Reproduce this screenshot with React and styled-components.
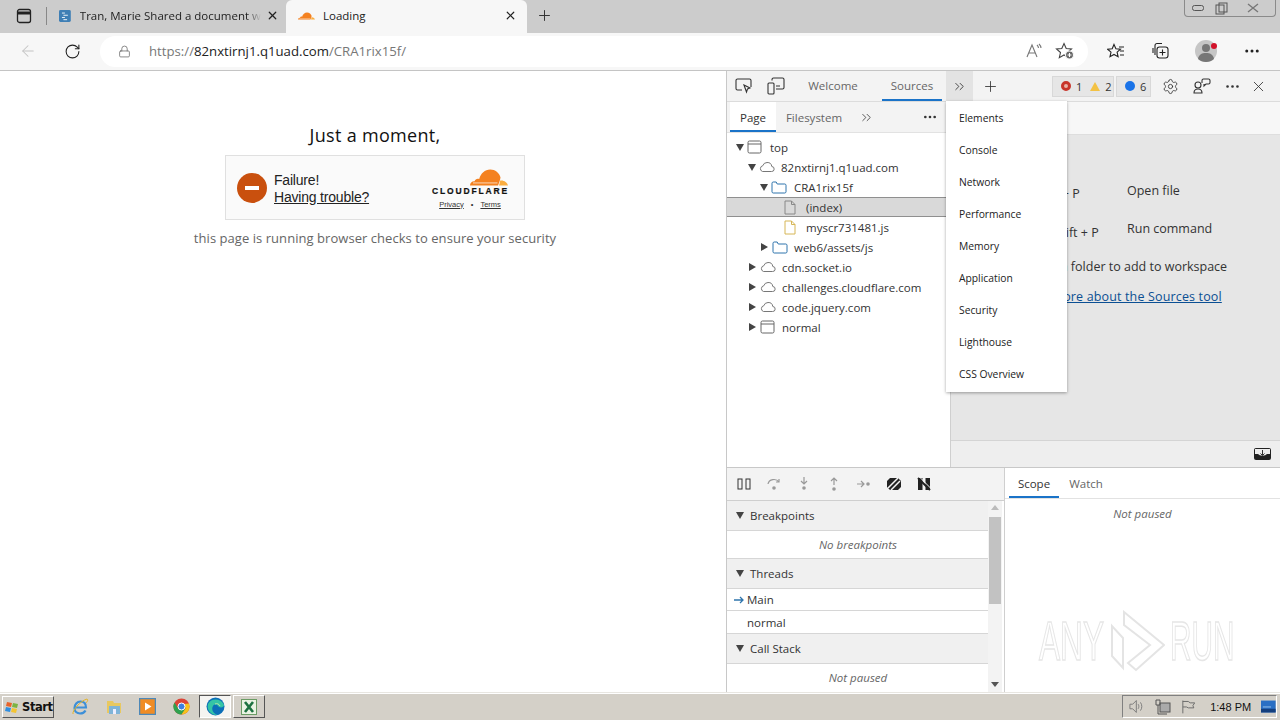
import React from 'react'
import styled, { createGlobalStyle } from 'styled-components'
import { ArrowLeft, RotateCw, Lock, Plus, X, Settings, Ellipsis, ChevronsRight } from 'lucide-react'

const Global = createGlobalStyle`
  html, body { margin: 0; padding: 0; overflow: hidden; background: #fff; }
  body { font-family: "Open Sans", "Noto Sans", sans-serif; color: #333; }
  * { box-sizing: border-box; }
`

const Win = styled.div`
  width: 1280px;
  height: 720px;
  display: flex;
  flex-direction: column;
  position: relative;
  overflow: hidden;
`

/* browser chrome */
const TabStrip = styled.div`
  height: 33px;
  background: #cccccc;
  display: flex;
  align-items: flex-start;
  position: relative;
  flex: none;
`
const SideBtn = styled.div`
  width: 47px;
  height: 31px;
  display: flex;
  align-items: center;
  justify-content: center;
  position: relative;
  &::after {
    content: '';
    position: absolute;
    right: 0;
    top: 7px;
    width: 1px;
    height: 18px;
    background: #888;
  }
`
const Tab = styled.div`
  width: ${p => p.$w}px;
  height: ${p => (p.$active ? 33 : 31)}px;
  padding: 0 ${p => p.$pr}px ${p => (p.$active ? 2 : 0)}px 12px;
  display: flex;
  align-items: center;
  background: ${p => (p.$active ? '#f7f7f7' : 'transparent')};
  border-radius: 6px 6px 0 0;
  font-size: 11.5px;
  color: #222;
`
const TabTitle = styled.span`
  flex: 1;
  margin-left: ${p => p.$ml}px;
  white-space: nowrap;
  -webkit-mask-image: ${p => (p.$fade ? 'linear-gradient(90deg, #000 92%, transparent)' : 'none')};
  mask-image: ${p => (p.$fade ? 'linear-gradient(90deg, #000 92%, transparent)' : 'none')};
`
const NewTab = styled.div`
  width: 34px;
  height: 31px;
  display: flex;
  align-items: center;
  justify-content: center;
`
const WinControls = styled.div`
  position: absolute;
  right: 4px;
  top: 0;
  width: 92px;
  height: 17px;
  border: 1px solid #8a8a8a;
  border-top: none;
  border-radius: 0 0 4px 4px;
  display: grid;
  grid-template-columns: 26px 20px 44px;
  align-items: center;
  justify-items: center;
`
const Toolbar = styled.div`
  height: 38px;
  padding-bottom: 1px;
  background: #f7f7f7;
  border-bottom: 1px solid #c4c4c4;
  display: flex;
  align-items: center;
  flex: none;
`
const NavBtn = styled.div`
  width: ${p => p.$w || 44}px;
  display: flex;
  justify-content: center;
  align-items: center;
  flex: none;
`
const Address = styled.div`
  width: 988px;
  height: 31px;
  margin-left: 12px;
  border-radius: 16px;
  background: #fff;
  display: flex;
  align-items: center;
  padding-left: 18px;
  font-size: 13.2px;
  color: #777;
`
const UrlText = styled.span`
  margin-left: 18px;
  flex: 1;
  white-space: nowrap;
  & b { font-weight: 400; color: #222; }
`

/* main split */
const Main = styled.div`
  flex: 1;
  display: flex;
  min-height: 0;
`
const Page = styled.div`
  width: 726px;
  background: #fff;
  padding: 52px 0 0 24px;
  display: flex;
  flex-direction: column;
  align-items: center;
`
const Heading = styled.h1`
  margin: 0;
  font-size: 18px;
  line-height: 24px;
  font-weight: 400;
  letter-spacing: 0.3px;
  color: #111;
`
const Widget = styled.div`
  width: 300px;
  height: 65px;
  margin-top: 8px;
  background: #fafafa;
  border: 1px solid #e0e0e0;
  display: flex;
  align-items: center;
  padding: 0 16px 0 11px;
  font-family: "Liberation Sans", Arial, sans-serif;
`
const FailDot = styled.div`
  width: 30px;
  height: 30px;
  border-radius: 50%;
  background: #c9500e;
  display: flex;
  align-items: center;
  justify-content: center;
  &::after {
    content: '';
    width: 14px;
    height: 4px;
    background: #fff;
  }
`
const FailText = styled.div`
  margin: 2px 0 0 7px;
  flex: 1;
  font-size: 14px;
  line-height: 17px;
  letter-spacing: -0.2px;
  color: #222;
  & u { display: block; }
`
const Brand = styled.div`
  display: flex;
  flex-direction: column;
  align-items: flex-end;
  width: 78px;
`
const BrandName = styled.div`
  font-size: 8.5px;
  line-height: 10px;
  font-weight: 700;
  letter-spacing: 1.85px;
  color: #111;
  margin-right: -1px;
  white-space: nowrap;
  -webkit-text-stroke: 0.2px #111;
`
const BrandLinks = styled.div`
  font-size: 7.5px;
  line-height: 9px;
  margin-top: 4px;
  color: #333;
  display: flex;
  gap: 7px;
  align-self: center;
  margin-left: 2px;
  & u { display: block; }
`
const Note = styled.p`
  margin: 9px 0 0;
  font-size: 13px;
  line-height: 18px;
  letter-spacing: 0.05px;
  color: #666;
`

/* devtools */
const Dev = styled.div`
  width: 554px;
  border-left: 1px solid #c8c8c8;
  display: flex;
  flex-direction: column;
  font-size: 11.5px;
  color: #333;
  position: relative;
`
const DevBar = styled.div`
  height: 31px;
  background: #f3f3f3;
  border-bottom: 1px solid #dcdcdc;
  display: flex;
  align-items: center;
  flex: none;
`
const DevIcon = styled.div`
  width: ${p => p.$w || 32}px;
  height: 30px;
  margin-left: ${p => p.$ml || 0}px;
  display: flex;
  align-items: center;
  justify-content: center;
  background: ${p => (p.$on ? '#e3e3e3' : 'transparent')};
  flex: none;
`
const DevTab = styled.div`
  width: ${p => p.$w}px;
  margin-left: ${p => p.$ml || 0}px;
  height: 30px;
  line-height: 30px;
  text-align: center;
  color: #666;
  border-bottom: ${p => (p.$on ? '2px solid #1a73c8' : 'none')};
`
const Badge = styled.div`
  height: 21px;
  margin-left: ${p => p.$ml}px;
  width: ${p => p.$w}px;
  padding-left: 8px;
  background: #e6e6e6;
  border: 1px solid #d8d8d8;
  display: flex;
  align-items: center;
  gap: 3px;
  font-size: 11px;
  flex: none;
`
const Dot = styled.span`
  width: 10px;
  height: 10px;
  border-radius: 50%;
  background: ${p => p.$c};
  display: inline-block;
  border: ${p => (p.$ring ? '3px solid #c8352b' : 'none')};
  margin-right: 2px;
`
const Warn = styled.span`
  width: 0;
  height: 0;
  border-left: 5px solid transparent;
  border-right: 5px solid transparent;
  border-bottom: 9px solid #f3c244;
  margin: 0 2px 0 5px;
`
const Upper = styled.div`
  height: 366px;
  display: flex;
  flex: none;
  border-bottom: 1px solid #c8c8c8;
`
const Nav = styled.div`
  width: 224px;
  border-right: 1px solid #cfcfcf;
  display: flex;
  flex-direction: column;
  flex: none;
`
const NavTabs = styled.div`
  height: 31px;
  background: #f3f3f3;
  border-bottom: 1px solid #e2e2e2;
  display: flex;
  align-items: center;
  padding-left: 3px;
  flex: none;
`
const NavTab = styled.div`
  height: 30px;
  width: ${p => p.$w}px;
  margin-left: ${p => p.$ml || 0}px;
  line-height: 31px;
  text-align: center;
  color: ${p => (p.$on ? '#333' : '#666')};
  background: ${p => (p.$on ? '#fff' : 'transparent')};
  border-bottom: ${p => (p.$on ? '2px solid #1a73c8' : 'none')};
  flex: none;
`
const Tree = styled.div`
  padding-top: 4px;
  width: 219px;
`
const Row = styled.div`
  height: 20px;
  display: flex;
  align-items: center;
  padding-left: ${p => 9 + p.$lv * 12}px;
  white-space: nowrap;
  color: #333;
  background: ${p => (p.$sel ? '#d9d9d9' : 'transparent')};
  box-shadow: ${p => (p.$sel ? 'inset 0 1px 0 #8f8f8f, inset 0 -1px 0 #8f8f8f' : 'none')};
  & > span { margin-left: ${p => p.$gap ?? 6}px; }
`
const Arrow = styled.i`
  width: 0;
  height: 0;
  flex: none;
  margin-right: 3px;
  ${p => (p.$open
    ? 'border-left: 4.5px solid transparent; border-right: 4.5px solid transparent; border-top: 7px solid #444; margin-left: 0;'
    : 'border-top: 4.5px solid transparent; border-bottom: 4.5px solid transparent; border-left: 7px solid #444; margin-left: 1px; margin-right: 4px;')}
`
const ArrowGap = styled.i`
  width: 12px;
  flex: none;
`
const Editor = styled.div`
  flex: 1;
  display: flex;
  flex-direction: column;
  background: #e6e6e6;
  min-width: 0;
`
const EditorTabs = styled.div`
  height: 33px;
  background: #f7f7f7;
  border-bottom: 1px solid #dedede;
  flex: none;
`
const Hints = styled.div`
  flex: 1;
  padding: 47px 0 0 63px;
  font-size: 12.5px;
  color: #333;
  white-space: nowrap;
`
const HintRow = styled.div`
  display: flex;
  height: ${p => p.$h}px;
`
const Key = styled.span`
  width: 113px;
  padding-left: ${p => p.$pad}px;
  padding-top: ${p => p.$top}px;
`
const Line = styled.div`
  height: ${p => p.$h}px;
  color: ${p => p.$c || '#333'};
  text-decoration: ${p => (p.$link ? 'underline' : 'none')};
  letter-spacing: ${p => (p.$link ? '0.15px' : '0')};
`
const EditorFoot = styled.div`
  height: 27px;
  background: #eeeeee;
  border-top: 1px solid #d4d4d4;
  display: flex;
  align-items: center;
  justify-content: flex-end;
  padding-right: 9px;
  flex: none;
`
const Menu = styled.div`
  position: absolute;
  left: 219px;
  top: 30px;
  width: 121px;
  height: 291px;
  padding-top: 1px;
  background: #fff;
  box-shadow: 0 1px 3px rgba(0, 0, 0, 0.35);
  z-index: 3;
`
const MenuItem = styled.div`
  height: 32px;
  line-height: 32px;
  padding-left: 13px;
  font-size: 10.3px;
  color: #222;
`
const Lower = styled.div`
  flex: 1;
  display: flex;
  min-height: 0;
`
const Debug = styled.div`
  width: 278px;
  border-right: 1px solid #cfcfcf;
  display: flex;
  flex-direction: column;
  flex: none;
  position: relative;
`
const DebugBar = styled.div`
  height: 33px;
  background: #f3f3f3;
  border-bottom: 1px solid #cfcfcf;
  display: flex;
  align-items: center;
  padding-left: 2px;
  flex: none;
`
const Section = styled.div`
  height: 30px;
  background: #f0f0f0;
  border-bottom: 1px solid #d6d6d6;
  display: flex;
  align-items: center;
  padding-left: 9px;
  width: 262px;
  color: #333;
  flex: none;
  & i { margin-right: 6px; }
`
const Empty = styled.div`
  width: 262px;
  height: ${p => p.$h}px;
  display: flex;
  align-items: center;
  justify-content: center;
  font-style: italic;
  color: #666;
  flex: none;
  border-bottom: ${p => (p.$line ? '1px solid #d6d6d6' : 'none')};
`
const Thread = styled.div`
  width: 262px;
  height: ${p => p.$h}px;
  display: flex;
  align-items: center;
  padding-left: 20px;
  border-bottom: 1px solid #d6d6d6;
  position: relative;
  color: #333;
  flex: none;
`
const ThreadMark = styled.span`
  position: absolute;
  left: 7px;
  top: 6px;
  display: flex;
`
const Scroll = styled.div`
  position: absolute;
  right: 2px;
  top: 33px;
  bottom: 0;
  width: 14px;
  background: #f3f3f3;
`
const Thumb = styled.div`
  position: absolute;
  left: 1px;
  top: 16px;
  width: 12px;
  height: 87px;
  background: #c2c2c2;
`
const ScrollArrow = styled.i`
  position: absolute;
  left: 3px;
  width: 0;
  height: 0;
  border-left: 4px solid transparent;
  border-right: 4px solid transparent;
  ${p => (p.$up ? 'top: 4px; border-bottom: 5px solid #bbb;' : 'bottom: 5px; border-top: 5px solid #555;')}
`
const Scope = styled.div`
  flex: 1;
  display: flex;
  flex-direction: column;
`
const ScopeTabs = styled.div`
  height: 31px;
  display: flex;
  align-items: center;
  padding-left: 4px;
  background: #fff;
  border-bottom: 1px solid #e2e2e2;
`
const Paused = styled.div`
  text-align: center;
  font-style: italic;
  color: #666;
  margin-top: 7px;
`
const Watermark = styled.div`
  position: absolute;
  left: 312px;
  bottom: 20px;
  display: flex;
  align-items: center;
  gap: 5px;
  z-index: 4;
  pointer-events: none;
`
const MarkWord = styled.span`
  width: 65px;
  font-family: "Liberation Sans", Arial, sans-serif;
  font-size: 55px;
  line-height: 50px;
  color: rgba(255, 255, 255, 0.6);
  -webkit-text-stroke: 1.5px #e6e6e6;
  display: inline-block;
  transform: scaleX(${p => p.$sx});
  transform-origin: left center;
  white-space: nowrap;
`

/* taskbar */
const Taskbar = styled.div`
  height: 28px;
  background: #d4d0c8;
  border-top: 1px solid #e8e6e1;
  box-shadow: inset 0 1px 0 #fff;
  display: flex;
  align-items: center;
  padding-left: 2px;
  flex: none;
  font-family: Tahoma, "DejaVu Sans", sans-serif;
`
const StartBtn = styled.div`
  width: 52px;
  height: 22px;
  display: flex;
  align-items: center;
  padding-left: 2px;
  gap: 2px;
  font-size: 11.5px;
  font-weight: 700;
  color: #111;
  font-family: "DejaVu Sans", sans-serif;
  letter-spacing: -0.4px;
  border: 1px solid;
  border-color: #fff #555 #555 #fff;
`
const Quick = styled.div`
  width: ${p => p.$w || 34}px;
  margin-left: ${p => p.$ml || 0}px;
  display: flex;
  justify-content: center;
`
const TaskBtn = styled.div`
  width: 32px;
  height: 23px;
  margin-left: ${p => p.$ml || 0}px;
  display: flex;
  align-items: center;
  justify-content: center;
  border: 1px solid;
  border-color: ${p => (p.$down ? '#555 #fff #fff #555' : '#fff #555 #555 #fff')};
  background: ${p => (p.$down ? '#f5f4f1' : 'transparent')};
`
const Tray = styled.div`
  margin-left: auto;
  margin-right: 3px;
  width: 155px;
  height: 23px;
  border: 1px solid;
  border-color: #808080 #fff #fff #808080;
  display: flex;
  align-items: center;
  padding-left: 6px;
  font-size: 11px;
  color: #111;
  font-family: "Liberation Sans", Arial, sans-serif;
`
const Clock = styled.span`
  margin-left: 15px;
  width: 56px;
`

const Cloud = ({ c = '#777', w = 16 }) => (
  <svg width={w} height={w * 0.72} viewBox="0 0 16 11.5" fill="none" stroke={c}>
    <path d="M3.5 10.5h9a2.5 2.5 0 0 0 .3-5A4.6 4.6 0 0 0 8 1.5a4.5 4.5 0 0 0-4.2 3.2 3 3 0 0 0-.3 5.8z" />
  </svg>
)
const Frame = () => (
  <svg width="15" height="14" viewBox="0 0 15 14" fill="none" stroke="#666">
    <rect x="1" y="1" width="13" height="12" rx="1.5" />
    <path d="M1 4h13" />
  </svg>
)
const Folder = () => (
  <svg width="16" height="13" viewBox="0 0 16 13" fill="none" stroke="#2f75ad">
    <path d="M1 2.2C1 1.5 1.5 1 2.2 1h3l1 2h7.6c.7 0 1.2.5 1.2 1.2v6.6c0 .7-.5 1.2-1.2 1.2H2.2C1.5 12 1 11.5 1 10.8z" />
  </svg>
)
const Doc = ({ c }) => (
  <svg width="12" height="15" viewBox="0 0 12 15" fill="none" stroke={c}>
    <path d="M1 1h6.5L11 4.5V14H1z M7.5 1v3.5H11" />
  </svg>
)
const CfCloud = ({ w = 38, h = 19 }) => (
  <svg width={w} height={h} viewBox="0 0 38 19">
    <path fill="#f48120" d="M0 18.5c0-2.6 2-4.4 4.6-4.2.6-2 2.6-3 4.6-2.2C10.6 6.600 15 2.600 20.200 2.600c5 0 9.200 3.400 10.300 8 -.4 2.600-1.400 5.200-2.500 7.900z" />
    <path fill="#faad3f" d="M29 18.500c.5-1.600 1-3.200 1.200-5 .3-.1.700-.1 1-.1 3.400 0 6.200 2.200 6.800 5.100z" />
    <path fill="#fff" d="M3 15.600h24.500v.7H3z" />
  </svg>
)

const treeRows = [
  { lv: 0, open: true, icon: <Frame />, label: 'top', gap: 8 },
  { lv: 1, open: true, icon: <Cloud />, label: '82nxtirnj1.q1uad.com' },
  { lv: 2, open: true, icon: <Folder />, label: 'CRA1rix15f', gap: 7 },
  { lv: 3, icon: <Doc c="#888" />, label: '(index)', sel: true, gap: 10 },
  { lv: 3, icon: <Doc c="#d6b656" />, label: 'myscr731481.js', gap: 10 },
  { lv: 2, closed: true, icon: <Folder />, label: 'web6/assets/js' },
  { lv: 1, closed: true, icon: <Cloud />, label: 'cdn.socket.io' },
  { lv: 1, closed: true, icon: <Cloud />, label: 'challenges.cloudflare.com' },
  { lv: 1, closed: true, icon: <Cloud />, label: 'code.jquery.com' },
  { lv: 1, closed: true, icon: <Frame />, label: 'normal', gap: 7 },
]

const menuItems = ['Elements', 'Console', 'Network', 'Performance', 'Memory', 'Application', 'Security', 'Lighthouse', 'CSS Overview']

function Stepper({ d, dot }) {
  return (
    <svg width="16" height="16" viewBox="0 0 16 16" fill="none" stroke="#999" strokeWidth="1.2">
      <path d={d} />
      <circle cx={dot[0]} cy={dot[1]} r="1.8" fill="#999" stroke="none" />
    </svg>
  )
}

export default function App() {
  return (
    <Win>
      <Global />
      <TabStrip>
        <SideBtn>
          <svg width="16" height="16" viewBox="0 0 16 16" fill="none" stroke="#222" strokeWidth="1.3">
            <rect x="1.500" y="1.500" width="13" height="13" rx="2" />
            <path d="M1.500 5h13" strokeWidth="3" />
          </svg>
        </SideBtn>
        <Tab $w={239} $pr={3}>
          <svg width="16" height="16" viewBox="0 0 16 16">
            <rect width="16" height="16" rx="2" fill="#3f7fb5" />
            <path d="M4 4h4M6 7h6M4 10h4M6 13h5" stroke="#fff" strokeWidth="1.200" />
          </svg>
          <TabTitle $ml={9} $fade>Tran, Marie Shared a document w</TabTitle>
          <NavBtn $w={22}><X size={13} color="#222" strokeWidth={2.2} /></NavBtn>
        </Tab>
        <Tab $w={241} $pr={6} $active>
          <CfCloud w={17} h={9} />
          <TabTitle $ml={8}>Loading</TabTitle>
          <NavBtn $w={22}><X size={13} color="#222" strokeWidth={2.2} /></NavBtn>
        </Tab>
        <NewTab><Plus size={17} color="#333" strokeWidth={1.4} /></NewTab>
        <WinControls>
          <svg width="12" height="6" viewBox="0 0 12 6" fill="none" stroke="#555"><rect x="0.500" y="0.500" width="11" height="5" rx="2" /></svg>
          <svg width="13" height="13" viewBox="0 0 13 13" fill="none" stroke="#555"><rect x="1" y="3" width="8" height="9" /><rect x="4" y="1" width="8" height="9" /></svg>
          <svg width="12" height="10" viewBox="0 0 12 10" fill="none" stroke="#777" strokeWidth="1.400"><path d="M1 1l10 8M11 1L1 9" /></svg>
        </WinControls>
      </TabStrip>
      <Toolbar>
        <NavBtn $w={56}><ArrowLeft size={18} color="#c4c4c4" strokeWidth={1.4} /></NavBtn>
        <NavBtn $w={32}><RotateCw size={17} color="#222" strokeWidth={1.5} /></NavBtn>
        <Address>
          <Lock size={13} color="#666" strokeWidth={1.4} />
          <UrlText>https://<b>82nxtirnj1.q1uad.com</b>/CRA1rix15f/</UrlText>
          <svg width="16" height="16" viewBox="0 0 16 16" fill="none" stroke="#777" strokeWidth="1.100">
            <path d="M1 14L6 2l5 12M3 10h6M11 2c1 1 1.500 2 1.500 3M13 1c1.200 1.200 2 2.600 2 4" />
          </svg>
          <NavBtn $w={46}>
            <svg width="20" height="18" viewBox="0 0 20 18" fill="none" stroke="#444" strokeWidth="1.100">
              <path d="M9 1.500l2.200 5 5.300.5-4 3.500 1.200 5.200L9 13l-4.700 2.700 1.200-5.200-4-3.500 5.300-.5z" />
              <circle cx="14.500" cy="13" r="4" fill="#666" stroke="#f7f7f7" />
              <path d="M14.500 11v4M12.500 13h4" stroke="#fff" />
            </svg>
          </NavBtn>
        </Address>
        <NavBtn $w={56}>
          <svg width="18" height="17" viewBox="0 0 18 17" fill="none" stroke="#222" strokeWidth="1.100">
            <path d="M7 1.500l1.900 4.300 4.600.4-3.400 3 1 4.500-4.100-2.300-4 2.300 1-4.500-3.400-3 4.600-.4zM12 4h5M13 8h4M13 12h4" />
          </svg>
        </NavBtn>
        <NavBtn $w={32}>
          <svg width="18" height="18" viewBox="0 0 18 18" fill="none" stroke="#222" strokeWidth="1.100">
            <path d="M4 13V3.500A2 2 0 0 1 6 1.500h5M2 11V6" />
            <rect x="6" y="5" width="11" height="11" rx="2.500" />
            <path d="M11.500 7.500v6M8.500 10.500h6" />
          </svg>
        </NavBtn>
        <NavBtn $w={62}>
          <svg width="24" height="24" viewBox="0 0 24 24">
            <circle cx="11" cy="12" r="11" fill="#c6c6c6" />
            <circle cx="11" cy="9" r="4" fill="#777" />
            <path d="M3 20c1-5 4-6 8-6s7 1 8 6c-2 2-5 3-8 3s-6-1-8-3z" fill="#777" />
            <circle cx="19" cy="7" r="3" fill="#d2132b" />
          </svg>
        </NavBtn>
        <NavBtn $w={28}><Ellipsis size={18} color="#222" strokeWidth={2} /></NavBtn>
      </Toolbar>
      <Main>
        <Page>
          <Heading>Just a moment,</Heading>
          <Widget>
            <FailDot />
            <FailText>
              Failure!
              <u>Having trouble?</u>
            </FailText>
            <Brand>
              <CfCloud />
              <BrandName>CLOUDFLARE</BrandName>
              <BrandLinks><u>Privacy</u><span>•</span><u>Terms</u></BrandLinks>
            </Brand>
          </Widget>
          <Note>this page is running browser checks to ensure your security</Note>
        </Page>
        <Dev>
          <DevBar>
            <DevIcon $ml={1}>
              <svg width="18" height="16" viewBox="0 0 18 16" fill="none" stroke="#333" strokeWidth="1.100">
                <path d="M7 12H2.500A1.500 1.500 0 0 1 1 10.500v-8A1.500 1.500 0 0 1 2.500 1h12A1.500 1.500 0 0 1 16 2.500V9" />
                <path d="M9 7l6 3-2.500 1-1 3z" />
              </svg>
            </DevIcon>
            <DevIcon>
              <svg width="18" height="18" viewBox="0 0 18 18" fill="none" stroke="#333" strokeWidth="1.100">
                <rect x="1" y="6" width="6" height="11" rx="1" />
                <path d="M5 3.500V2.500A1.500 1.500 0 0 1 6.500 1h9A1.500 1.500 0 0 1 17 2.500v8a1.500 1.500 0 0 1-1.500 1.500H9M9 9h4" />
              </svg>
            </DevIcon>
            <DevTab $w={66} $ml={8}>Welcome</DevTab>
            <DevTab $w={60} $ml={16} $on>Sources</DevTab>
            <DevIcon $w={27} $ml={4} $on><ChevronsRight size={15} color="#333" strokeWidth={1.400} /></DevIcon>
            <DevIcon $w={34}><Plus size={17} color="#333" strokeWidth={1.200} /></DevIcon>
            <Badge $ml={45} $w={62}><Dot $c="#e8b4a8" $ring />1<Warn />2</Badge>
            <Badge $ml={2} $w={35}><Dot $c="#1a73e8" />6</Badge>
            <DevIcon $ml={3}><Settings size={17} color="#333" strokeWidth={1.200} /></DevIcon>
            <DevIcon>
              <svg width="18" height="16" viewBox="0 0 18 16" fill="none" stroke="#333" strokeWidth="1.100">
                <circle cx="5" cy="7" r="3" />
                <path d="M1 15c0-3 2-4 4-4s4 1 4 4zM9 5V2.500A1.500 1.500 0 0 1 10.500 1h5A1.500 1.500 0 0 1 17 2.500v2A1.500 1.500 0 0 1 15.500 6H13l-2 2V6" />
              </svg>
            </DevIcon>
            <DevIcon $w={28}><Ellipsis size={17} color="#333" strokeWidth={1.800} /></DevIcon>
            <DevIcon $w={24}><X size={17} color="#333" strokeWidth={1.200} /></DevIcon>
          </DevBar>
          <Upper>
            <Nav>
              <NavTabs>
                <NavTab $w={46} $on>Page</NavTab>
                <NavTab $w={76}>Filesystem</NavTab>
                <DevIcon $w={30} $ml={-1}><ChevronsRight size={15} color="#444" strokeWidth={1.400} /></DevIcon>
                <DevIcon $w={30} $ml={34}><Ellipsis size={16} color="#333" strokeWidth={2} /></DevIcon>
              </NavTabs>
              <Tree>
                {treeRows.map(r => (
                  <Row key={r.label} $lv={r.lv} $sel={r.sel} $gap={r.gap}>
                    {r.open ? <Arrow $open /> : r.closed ? <Arrow /> : <ArrowGap />}
                    {r.icon}
                    <span>{r.label}</span>
                  </Row>
                ))}
              </Tree>
            </Nav>
            <Editor>
              <EditorTabs />
              <Hints>
                <HintRow $h={38}><Key $pad={24} $top={3}>Ctrl + P</Key><span>Open file</span></HintRow>
                <HintRow $h={38}><Key $pad={3} $top={4}>Ctrl + Shift + P</Key><span>Run command</span></HintRow>
                <Line $h={30}>Drop in a folder to add to workspace</Line>
                <Line $h={20} $c="#0b4f93" $link>Learn more about the Sources tool</Line>
              </Hints>
              <EditorFoot>
                <svg width="17" height="13" viewBox="0 0 17 13">
                  <rect width="17" height="12" rx="2" fill="#222" />
                  <path d="M1 1h15v5h-3a5 3 0 0 1-9 0H1z" fill="#eee" />
                  <path d="M8.500 2v5M6.500 5.500l2 2 2-2" stroke="#333" fill="none" />
                </svg>
              </EditorFoot>
            </Editor>
          </Upper>
          <Lower>
            <Debug>
              <DebugBar>
                <DevIcon $w={30}>
                  <svg width="14" height="12" viewBox="0 0 14 12" fill="none" stroke="#333"><rect x="1" y="1" width="4" height="10" /><rect x="9" y="1" width="4" height="10" /></svg>
                </DevIcon>
                <DevIcon $w={30}><Stepper d="M2 8C3 3 10 2 13 6M13 3v3h-3" dot={[8, 12]} /></DevIcon>
                <DevIcon $w={30}><Stepper d="M8 1v7M5 5l3 3 3-3" dot={[8, 12]} /></DevIcon>
                <DevIcon $w={30}><Stepper d="M8 9V2M5 5l3-3 3 3" dot={[8, 13]} /></DevIcon>
                <DevIcon $w={30}><Stepper d="M1 8h7M5 5l3 3-3 3" dot={[12, 8]} /></DevIcon>
                <DevIcon $w={30}>
                  <svg width="14" height="14" viewBox="0 0 14 14">
                    <path d="M3 1h8l3 3v6l-3 3H3l-3-3V4z" fill="#222" />
                    <path d="M1 11L11 1M4 13L13 4" stroke="#f3f3f3" strokeWidth="1.500" />
                  </svg>
                </DevIcon>
                <DevIcon $w={30}>
                  <svg width="14" height="14" viewBox="0 0 14 14">
                    <path d="M1 1h4.500v12H1zM8.500 1H13v12H8.500z" fill="#222" />
                    <path d="M1 1l12 12" stroke="#222" strokeWidth="2" />
                    <path d="M2.500 0l12 12" stroke="#f3f3f3" />
                  </svg>
                </DevIcon>
              </DebugBar>
              <Section><Arrow $open />Breakpoints</Section>
              <Empty $h={28} $line>No breakpoints</Empty>
              <Section><Arrow $open />Threads</Section>
              <Thread $h={22}>
                <ThreadMark>
                  <svg width="10" height="10" viewBox="0 0 10 10" fill="none" stroke="#2f75ad" strokeWidth="1.300"><path d="M0 5h9M6 2l3 3-3 3" /></svg>
                </ThreadMark>
                Main
              </Thread>
              <Thread $h={23}>normal</Thread>
              <Section><Arrow $open />Call Stack</Section>
              <Empty $h={27}>Not paused</Empty>
              <Scroll>
                <ScrollArrow $up />
                <Thumb />
                <ScrollArrow />
              </Scroll>
            </Debug>
            <Scope>
              <ScopeTabs>
                <NavTab $w={50} $on>Scope</NavTab>
                <NavTab $w={54}>Watch</NavTab>
              </ScopeTabs>
              <Paused>Not paused</Paused>
            </Scope>
          </Lower>
          <Menu>
            {menuItems.map(m => <MenuItem key={m}>{m}</MenuItem>)}
          </Menu>
          <Watermark>
            <MarkWord $sx={0.575}>ANY</MarkWord>
            <svg width="56" height="62" viewBox="0 0 56 62" fill="none" stroke="#e4e4e4" strokeWidth="2">
              <path d="M3 16v30l11 12V28zM15 2l40 33-28 25-8-7 22-18-26-20z" />
            </svg>
            <MarkWord $sx={0.54}>RUN</MarkWord>
          </Watermark>
        </Dev>
      </Main>
      <Taskbar>
        <StartBtn>
          <svg width="15" height="14" viewBox="0 0 15 14">
            <path d="M2 2l5 1-1 4-5-1z" fill="#e8632a" />
            <path d="M8 3l5 1-1 4-5-1z" fill="#7cb342" />
            <path d="M1 7l5 1-1 4-5-1z" fill="#2f8ee0" />
            <path d="M7 8l5 1-1 4-5-1z" fill="#f4c430" />
          </svg>
          Start
        </StartBtn>
        <Quick $ml={9}>
          <svg width="17" height="17" viewBox="0 0 17 17" fill="none">
            <path d="M3 9.500h11c0-3.500-2-6-5.500-6S2.500 6.500 2.500 10s2.500 5.500 5.500 5.500c2.500 0 4.500-1 5.500-3" stroke="#3c8fd8" strokeWidth="2.200" />
            <path d="M1 16C0 13 8 3 15 1c2 1-1 4-1 4" stroke="#e6b422" strokeWidth="1" />
          </svg>
        </Quick>
        <Quick>
          <svg width="17" height="17" viewBox="0 0 17 17">
            <path d="M1 3h6l1 2h7v10H1z" fill="#e8c860" />
            <rect x="3" y="8" width="11" height="8" fill="#7fb4d8" />
            <rect x="7" y="11" width="3" height="5" fill="#eef" />
          </svg>
        </Quick>
        <Quick $w={33}>
          <svg width="17" height="17" viewBox="0 0 17 17">
            <rect x="0.500" y="0.500" width="16" height="16" fill="#f08c24" stroke="#4d88b8" strokeWidth="1.500" />
            <path d="M6 4.500l6.500 4-6.500 4z" fill="#fff" />
          </svg>
        </Quick>
        <Quick>
          <svg width="17" height="17" viewBox="0 0 17 17">
            <circle cx="8.500" cy="8.500" r="8" fill="#dc4437" />
            <path d="M8.500 16.500a8 8 0 0 1-7-12l4 6.500h7z" fill="#2fa14f" />
            <path d="M16 5.500a8 8 0 0 1-7.500 11l4-6-1-4.500z" fill="#f6c21c" />
            <circle cx="8.500" cy="8.500" r="3.500" fill="#3b7fe0" stroke="#fff" />
          </svg>
        </Quick>
        <TaskBtn $down $ml={1}>
          <svg width="19" height="19" viewBox="0 0 19 19">
            <circle cx="9.500" cy="9.500" r="9" fill="#0c6fb8" />
            <path d="M2 7C5 1 15 1 18 8c0 3-5 3-6 1-1-2-4-2-5 0-2 3 0 8 5 9-6 1-12-5-10-11z" fill="#34c4a6" />
            <path d="M9 7c2-1 4 0 5 2" stroke="#b5e6a6" fill="none" />
          </svg>
        </TaskBtn>
        <TaskBtn $ml={2}>
          <svg width="16" height="16" viewBox="0 0 16 16">
            <rect x="0.500" y="0.500" width="15" height="15" fill="#eaf3e3" stroke="#6b9c64" />
            <path d="M4 3l8 10M12 3L4 13" stroke="#1d7240" strokeWidth="2.600" />
          </svg>
        </TaskBtn>
        <Tray>
          <svg width="17" height="15" viewBox="0 0 17 15" fill="none" stroke="#777">
            <path d="M1 5h3l4-4v13l-4-4H1zM10 5c1 1.500 1 3.500 0 5M12.500 3c2 2.500 2 6.500 0 9" />
          </svg>
          <NavBtn $w={36}>
            <svg width="16" height="16" viewBox="0 0 16 16" fill="none" stroke="#555">
              <rect x="5" y="4" width="10" height="9" fill="#aaa" />
              <path d="M1 1h4v5H1zM3 6v9h9" />
            </svg>
          </NavBtn>
          <svg width="16" height="15" viewBox="0 0 16 15" fill="none" stroke="#666">
            <path d="M2 1v14M2 2h6l2 1.500h5l-2 3 1 2.500H8L6 8H2" />
          </svg>
          <Clock>1:48 PM</Clock>
          <svg width="16" height="13" viewBox="0 0 16 13">
            <rect width="16" height="13" fill="#2a6fc4" />
            <path d="M0 9h16v4H0z" fill="#143f7e" />
            <path d="M2 7h9" stroke="#9cc7f0" />
          </svg>
        </Tray>
      </Taskbar>
    </Win>
  )
}
